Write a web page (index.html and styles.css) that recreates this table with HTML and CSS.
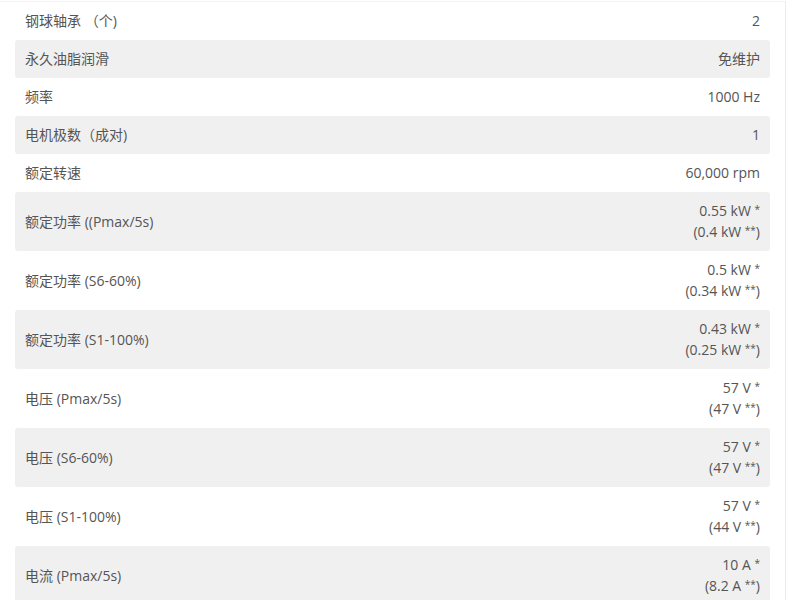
FILE: index.html
```html
<!DOCTYPE html>
<html lang="zh">
<head>
<meta charset="utf-8">
<link rel="stylesheet" href="styles.css">
</head>
<body>
<div class="panel">
  <div class="specs">
    <div class="row"><div class="label">钢球轴承 （个)</div><div class="value">2</div></div>
    <div class="row alt"><div class="label">永久油脂润滑</div><div class="value">免维护</div></div>
    <div class="row"><div class="label">频率</div><div class="value">1000 Hz</div></div>
    <div class="row alt"><div class="label">电机极数（成对)</div><div class="value">1</div></div>
    <div class="row"><div class="label">额定转速</div><div class="value">60,000 rpm</div></div>
    <div class="row alt"><div class="label">额定功率 ((Pmax/5s)</div><div class="value">0.55 kW <span class="ast">*</span><br>(0.4 kW <span class="ast">**</span>)</div></div>
    <div class="row"><div class="label">额定功率 (S6-60%)</div><div class="value">0.5 kW <span class="ast">*</span><br>(0.34 kW <span class="ast">**</span>)</div></div>
    <div class="row alt"><div class="label">额定功率 (S1-100%)</div><div class="value">0.43 kW <span class="ast">*</span><br>(0.25 kW <span class="ast">**</span>)</div></div>
    <div class="row"><div class="label">电压 (Pmax/5s)</div><div class="value">57 V <span class="ast">*</span><br>(47 V <span class="ast">**</span>)</div></div>
    <div class="row alt"><div class="label">电压 (S6-60%)</div><div class="value">57 V <span class="ast">*</span><br>(47 V <span class="ast">**</span>)</div></div>
    <div class="row"><div class="label">电压 (S1-100%)</div><div class="value">57 V <span class="ast">*</span><br>(44 V <span class="ast">**</span>)</div></div>
    <div class="row alt"><div class="label">电流 (Pmax/5s)</div><div class="value">10 A <span class="ast">*</span><br>(8.2 A <span class="ast">**</span>)</div></div>
  </div>
</div>
</body>
</html>
```
FILE: styles.css
```css
html, body {
  margin: 0;
  padding: 0;
  background: #fff;
}
body {
  font-family: "Open Sans", "Noto Sans CJK SC", sans-serif;
  font-size: 14px;
  color: #555;
}
.panel {
  width: 786px;
  margin-top: 1px;
  border-top: 1px solid #f2f2f2;
  border-right: 1px solid #ececec;
  min-height: 620px;
  box-sizing: border-box;
}
.specs {
  display: flex;
  flex-direction: column;
  padding: 0 15px;
}
.row {
  display: flex;
  justify-content: space-between;
  align-items: center;
  padding: 8px 10px 9px;
  line-height: 21px;
  border-radius: 3px;
}
.row.alt {
  background: #f0f0f0;
}
.label, .value {
  height: auto;
}
.value {
  text-align: right;
}
.ast {
  font-size: 10px;
  line-height: 0;
  vertical-align: 3px;
}
```
